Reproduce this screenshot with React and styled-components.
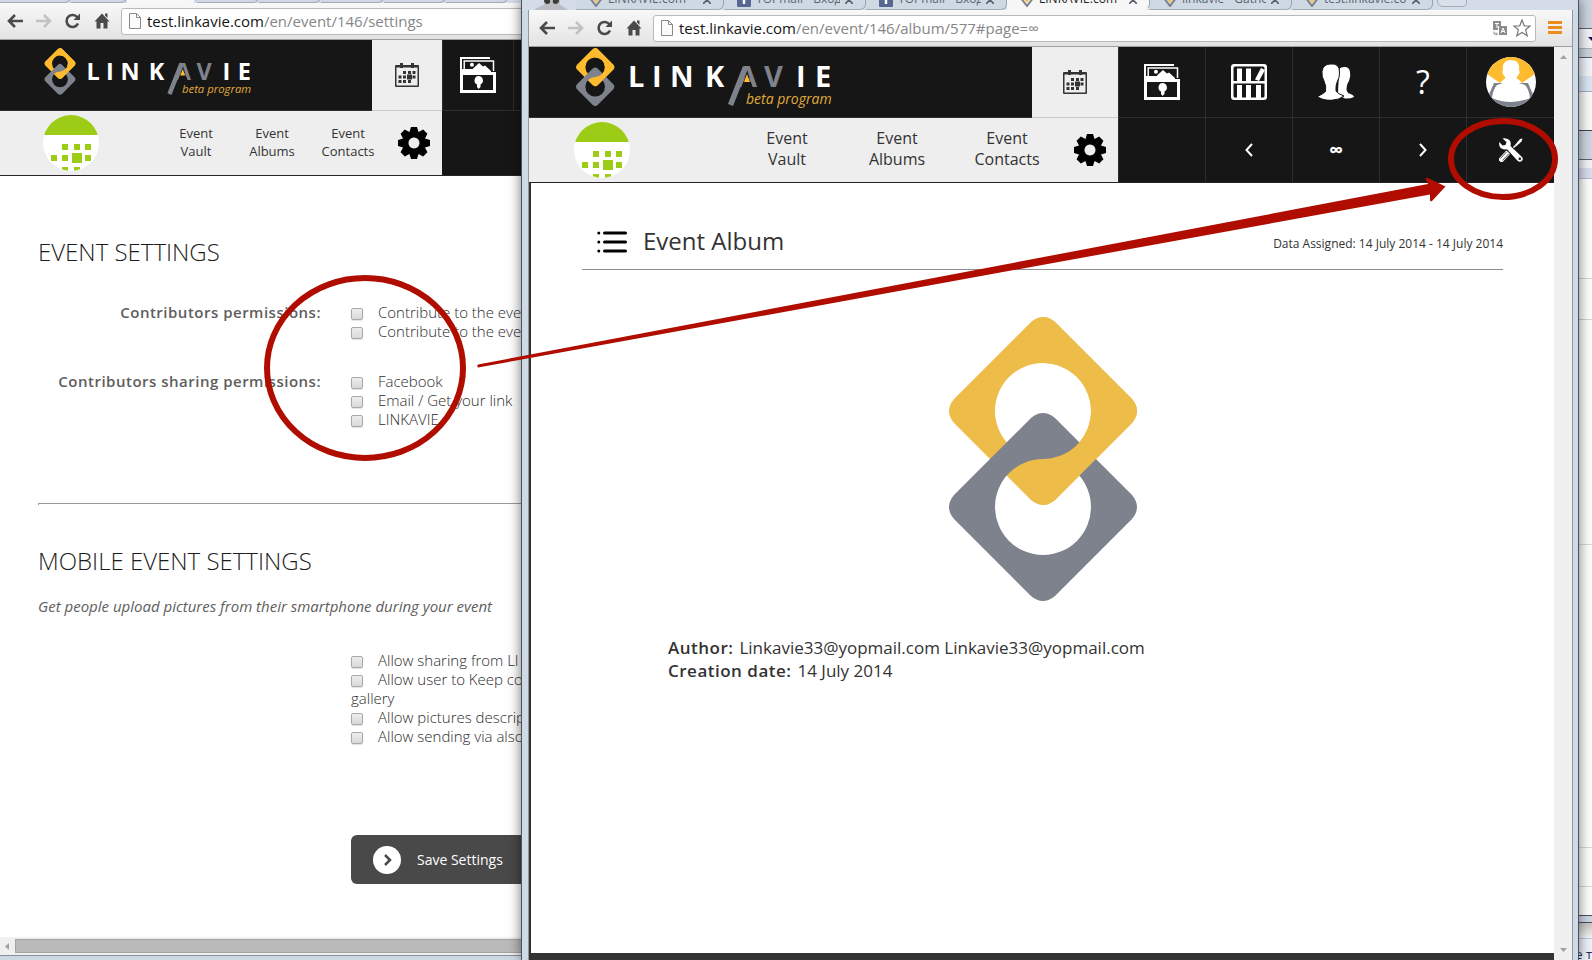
import React from 'react';
import styled, { createGlobalStyle, css } from 'styled-components';

const GlobalStyle = createGlobalStyle`
  * { box-sizing: border-box; }
  body { margin: 0; overflow: hidden; background: #fff; font-family: "Open Sans", "Noto Sans", sans-serif; color: #2e2e2e; }
  button { font: inherit; color: inherit; border: 0; padding: 0; background: none; }
  a { color: inherit; text-decoration: none; }
  h1, h2, p, dl, dd, fieldset { margin: 0; padding: 0; border: 0; font-weight: 400; }
  svg { display: block; flex: none; }
`;

const Desktop = styled.div`
  position: relative;
  height: 100vh;
  overflow: hidden;
`;

/* ---------- windows ---------- */

const BackWindow = styled.section`
  position: absolute;
  inset: 0 auto 0 0;
  width: 44%;
  display: flex;
  flex-direction: column;
  background: #fff;
`;

const FrontWindow = styled.section`
  position: absolute;
  inset: 0 13px 0 521px;
  display: flex;
  flex-direction: column;
  background: #d0dae6;
  border: solid #4c525b;
  border-width: 0 1px;
  box-shadow: 0 0 12px rgba(0, 0, 0, 0.55);
`;

const FrontInner = styled.div`
  flex: 1;
  min-height: 0;
  margin: 0 5px 0 6px;
  display: flex;
  flex-direction: column;
  border: solid #8d98a7;
  border-width: 0 1px;
`;

const Viewport = styled.div`
  flex: 1;
  min-height: 0;
  display: flex;
`;

const Strip = styled.aside`
  position: absolute;
  inset: 0 0 0 auto;
  width: 40px;
  display: flex;
  flex-direction: column;
`;

const Band = styled.div`
  flex: none;
  height: ${(p) => p.$h}px;
  background: ${(p) => p.$bg};
  border-bottom: ${(p) => (p.$line ? `1px solid ${p.$line}` : '0')};
  display: flex;
  align-items: center;
  justify-content: flex-end;
  overflow: hidden;
`;

const StripText = styled.span`
  font-size: 13px;
  line-height: 16px;
  color: #1d2b52;
  white-space: nowrap;
`;

/* ---------- browser chrome ---------- */

const Tabs = styled.div`
  flex: none;
  height: ${(p) => p.$h}px;
  padding-left: ${(p) => p.$pad}px;
  display: flex;
  align-items: flex-end;
  overflow: hidden;
  background: #d3dce8;
`;

const Tab = styled.button`
  flex: none;
  width: ${(p) => p.$w}px;
  height: 24px;
  padding: 0 12px 2px 13px;
  display: flex;
  align-items: flex-end;
  gap: 5px;
  font-size: 12px;
  line-height: 16px;
  color: ${(p) => (p.$active ? '#222' : '#5c6470')};
  background: ${(p) => (p.$active ? '#f7f7f7' : '#cfd9e4')};
  border-right: 1px solid #9aa4b0;
  border-bottom: 1px solid ${(p) => (p.$active ? '#f7f7f7' : '#a3abb6')};
  border-radius: 0 0 6px 0;
  span { flex: 1; overflow: hidden; white-space: nowrap; text-align: left; }
  svg:last-child { margin-bottom: 3px; }
`;

const NewTab = styled.button`
  width: 30px;
  height: 16px;
  margin: 0 0 3px 4px;
  border: 1px solid #a3abb6;
  border-radius: 0 0 4px 6px;
  background: #d8e0ea;
`;

const Persona = styled.span`
  width: 48px;
  height: 10px;
  display: flex;
  align-items: flex-end;
  padding-left: 6px;
`;

const Toolbar = styled.div`
  flex: none;
  height: 37px;
  padding-left: ${(p) => p.$pad}px;
  padding-right: 10px;
  display: flex;
  align-items: center;
  background: linear-gradient(#f8f8f8, #e3e3e3);
  border-bottom: 1px solid #9f9f9f;
`;

const NavButtons = styled.div`
  display: flex;
  gap: 13px;
`;

const Address = styled.div`
  flex: 1;
  height: 27px;
  margin: 0 12px 0 11px;
  padding: 0 4px 0 7px;
  display: flex;
  align-items: center;
  gap: 6px;
  background: #fff;
  border: 1px solid #b9b9b9;
  border-radius: 3px;
`;

const Url = styled.div`
  flex: 1;
  font-size: 15px;
  line-height: 20px;
  white-space: nowrap;
  color: #868686;
  b { font-weight: 400; color: #161616; }
`;

const VScroll = styled.div`
  flex: none;
  width: 18px;
  padding: 7px 0 6px;
  display: flex;
  flex-direction: column;
  align-items: center;
  justify-content: space-between;
  background: #f0f0f0;
`;

const HScroll = styled.div`
  flex: none;
  height: 18px;
  padding: 2px 0 2px 4px;
  display: flex;
  align-items: center;
  gap: 4px;
  background: #f0f0f0;
`;

const HThumb = styled.div`
  flex: 1;
  height: 14px;
  background: #bababa;
  border: 1px solid #a3a3a3;
`;

const BottomEdge = styled.div`
  flex: none;
  height: 5px;
  background: #cdd8e5;
  border-top: 1px solid #868f9b;
`;

/* ---------- site header ---------- */

const Page = styled.div`
  flex: 1;
  min-width: 0;
  min-height: 0;
  display: flex;
  flex-direction: column;
  overflow: hidden;
`;

const HeaderRow = styled.div`
  flex: none;
  display: flex;
  height: ${(p) => p.$h}px;
  background: #161616;
  border-bottom: ${(p) => (p.$last ? '1px solid #2a2226' : '0')};
`;

const Brand = styled.a`
  flex: ${(p) => (p.$w ? `0 0 ${p.$w}px` : '1')};
  padding-left: ${(p) => p.$pad}px;
  padding-top: ${(p) => p.$top}px;
  border-bottom: 1px solid #2e2e2e;
`;

const Cell = styled.button`
  flex: 0 0 ${(p) => p.$w}px;
  display: flex;
  align-items: center;
  justify-content: center;
  color: #fff;
  border-left: 1px solid #2d2d2d;
  border-bottom: ${(p) => (p.$flat ? '0' : '1px solid #2e2e2e')};
  ${(p) =>
    p.$active &&
    css`
      background: #eee;
      border-color: #c9c9c9;
      border-left: 0;
    `}
`;

const Question = styled.span`
  font-size: 32px;
  line-height: 40px;
`;

const Infinity = styled.span`
  font-size: 20px;
  line-height: 20px;
  font-weight: 700;
`;

const SubBar = styled.nav`
  flex: ${(p) => (p.$w ? `0 0 ${p.$w}px` : '1')};
  padding-left: ${(p) => p.$pad}px;
  padding-right: 12px;
  display: flex;
  align-items: center;
  background: #eee;
`;

const Links = styled.div`
  flex: 1;
  display: flex;
  justify-content: flex-end;
  padding: 0 12px 2px 0;
`;

const NavLink = styled.a`
  width: ${(p) => (p.$big ? 110 : 76)}px;
  font-size: ${(p) => (p.$big ? 16 : 13)}px;
  line-height: ${(p) => (p.$big ? 21 : 18)}px;
  text-align: center;
  color: #333;
`;

/* ---------- settings page ---------- */

const Settings = styled.main`
  flex: 1;
  padding: 60px 0 0 38px;
  background: #fff;
  color: #5e5e5e;
  font-size: 15px;
  line-height: 19px;
`;

const Heading = styled.h2`
  font-size: 24px;
  line-height: 32px;
  font-weight: 300;
  color: #1c1c1c;
`;

const Rule = styled.hr`
  height: 2px;
  margin: 74px 0 40px;
  border: solid #9a9a9a;
  border-width: 1px 0 0 1px;
`;

const Intro = styled.p`
  margin-top: 20px;
  font-style: italic;
`;

const Group = styled.fieldset`
  display: grid;
  grid-template-columns: 283px 1fr;
  column-gap: 30px;
  margin-top: ${(p) => p.$gap}px;
`;

const GroupName = styled.div`
  text-align: right;
  font-weight: 600;
  letter-spacing: 0.5px;
`;

const Option = styled.label`
  display: block;
  white-space: nowrap;
  font-weight: 300;
  color: #2c2c2c;
`;

const Check = styled.input`
  appearance: none;
  width: 12px;
  height: 12px;
  margin: 0 15px 0 0;
  vertical-align: -2px;
  border: 1px solid #a9a9a9;
  border-radius: 2px;
  background: linear-gradient(#ededed, #d9d9d9);
  box-shadow: 0 1px 1px rgba(0, 0, 0, 0.12);
`;

const Save = styled.button`
  width: 190px;
  height: 49px;
  margin: 89px 0 0 313px;
  padding-left: 22px;
  display: flex;
  align-items: center;
  gap: 16px;
  border-radius: 6px;
  background: #494949;
  color: #fff;
  font-size: 14px;
`;

/* ---------- album page ---------- */

const Album = styled.main`
  flex: 1;
  padding: 42px 51px 0;
  background: #fff;
`;

const DarkEdge = styled.div`
  flex: 1;
  min-height: 0;
  display: flex;
  border: solid #333;
  border-width: 0 0 7px 2px;
`;

const AlbumHead = styled.header`
  display: flex;
  align-items: center;
  gap: 16px;
  padding: 0 0 12px 15px;
  border-bottom: 1px solid #8f8f8f;
`;

const AlbumTitle = styled.h1`
  flex: 1;
  font-size: 24px;
  line-height: 32px;
  font-weight: 400;
  color: #333;
`;

const Assigned = styled.p`
  padding-top: 6px;
  font-size: 12px;
  line-height: 18px;
  color: #333;
`;

const Cover = styled.div`
  display: flex;
  justify-content: center;
  padding: 47px 0 35px;
`;

const Details = styled.dl`
  padding-left: 86px;
  font-size: 17px;
  line-height: 23px;
  color: #333;
  div { display: flex; gap: 6px; }
  dt { font-weight: 600; letter-spacing: 0.5px; }
`;

const Markup = styled.svg`
  position: absolute;
  inset: 0;
  width: 100%;
  height: 100%;
  pointer-events: none;
`;

/* ---------- drawings ---------- */

const ring = (cy) =>
  `M82 ${cy - 89} Q94 ${cy - 99} 106 ${cy - 89} L183 ${cy - 12} Q193 ${cy} 183 ${cy + 12} L106 ${cy + 89} Q94 ${cy + 99} 82 ${cy + 89} L5 ${cy + 12} Q-5 ${cy} 5 ${cy - 12} Z ` +
  `M94 ${cy - 48} A48 48 0 1 0 94 ${cy + 48} A48 48 0 1 0 94 ${cy - 48} Z`;

const Links8 = ({ yellow, grey, id }) => (
  <>
    <defs>
      <clipPath id={id}>
        <rect x="94" y="0" width="96" height="290" />
      </clipPath>
    </defs>
    <path fillRule="evenodd" fill={yellow} d={ring(94)} />
    <path fillRule="evenodd" fill={grey} d={ring(190)} />
    <path fillRule="evenodd" fill={yellow} d={ring(94)} clipPath={`url(#${id})`} />
  </>
);

const CoverLogo = () => (
  <svg width="188" height="284" viewBox="0 0 188 284">
    <Links8 id="cover" yellow="#eebc48" grey="#7d828d" />
  </svg>
);

const BrandLogo = ({ width, height, id }) => (
  <svg width={width} height={height} viewBox="0 0 256 68" role="img" aria-label="Linkavie beta program">
    <g transform="scale(.204)">
      <Links8 id={id} yellow="#fdbb2d" grey="#7d828d" />
    </g>
    <text y="39" fontFamily="Open Sans" fontWeight="700" fontSize="29" fill="#fff">
      <tspan x="52 76 94 129">LINK</tspan>
      <tspan x="161 188" fill="#7d828d">AV</tspan>
      <tspan x="220 239">IE</tspan>
    </text>
    <path d="M165 40 L171 25 L177 40 Z" fill="#161616" />
    <path d="M169.500 19 L154.500 57" stroke="#7d828d" strokeWidth="5.500" />
    <path d="M168 34 L171 26 L174 34 Z" fill="#fdbb2d" />
    <text x="170" y="56" fontFamily="Open Sans" fontStyle="italic" fontSize="14" fill="#e0ab3a">
      beta program
    </text>
  </svg>
);

const Arrow = ({ flip, color = '#4a4a4a' }) => (
  <svg width="16" height="16" viewBox="0 0 16 16" fill="none" stroke={color} strokeWidth="2.600">
    <path d={flip ? 'M0 8 H14 M8 2 L14 8 L8 14' : 'M16 8 H2 M8 2 L2 8 L8 14'} />
  </svg>
);

const Reload = () => (
  <svg width="16" height="16" viewBox="0 0 16 16">
    <path d="M13 10.500 A6 6 0 1 1 12.500 4.500" fill="none" stroke="#4a4a4a" strokeWidth="2.600" />
    <path d="M15 0.500 V7 H8.500 Z" fill="#4a4a4a" />
  </svg>
);

const Home = () => (
  <svg width="16" height="16" viewBox="0 0 16 16" fill="#4a4a4a">
    <path d="M8 0.500 L15.500 8.500 H13.500 V15.500 H9.500 V10 H6.500 V15.500 H2.500 V8.500 H0.500 Z M11 0.500 H13.500 V5 L11 2.500 Z" />
  </svg>
);

const Sheet = () => (
  <svg width="12" height="16" viewBox="0 0 12 16" fill="#fafafa" stroke="#8a8a8a">
    <path d="M.5 .5 H7.500 L11.500 4.500 V15.500 H.5 Z M7.500 .5 V4.500 H11.500" />
  </svg>
);

const Translate = () => (
  <svg width="14" height="15" viewBox="0 0 14 15">
    <path d="M0 0 H8 V5 H5 V9 H0 Z" fill="#8b8b8b" />
    <path d="M2 2.500 H6 M4 2.500 V7" stroke="#fff" />
    <rect x="6" y="5" width="8" height="9" fill="#8b8b8b" />
    <path d="M8 12 L10 7 L12 12 M9 10.500 H11" stroke="#fff" fill="none" />
    <path d="M1 10.500 V13 H4 M3 11.500 L4.500 13 L3 14.500" stroke="#8b8b8b" fill="none" />
  </svg>
);

const Star = () => (
  <svg width="18" height="18" viewBox="0 0 18 18" fill="#fff" stroke="#777" strokeWidth="1.200">
    <path d="M9 1 L11.300 6.800 L17.200 7 L12.600 10.800 L14.200 16.800 L9 13.400 L3.800 16.800 L5.400 10.800 L.8 7 L6.700 6.800 Z" />
  </svg>
);

const MenuIcon = () => (
  <svg width="14" height="14" viewBox="0 0 14 14" fill="#ec8c1c">
    <path d="M0 0 H14 V3 H0 Z M0 5 H14 V8 H0 Z M0 10 H14 V13 H0 Z" />
  </svg>
);

const TabIcon = ({ mail }) => (
  <svg width="14" height="14" viewBox="0 0 14 14">
    {mail ? (
      <>
        <rect width="14" height="14" rx="1" fill="#56688f" />
        <path d="M7 3 V11" stroke="#fff" strokeWidth="2.500" />
      </>
    ) : (
      <>
        <path d="M7 1 L12 6.500 L7 13 L2 6.500 Z" fill="none" stroke="#7d828d" strokeWidth="2" />
        <path d="M4 6 L7 3 L10 6 L7 10 Z" fill="#f3c558" />
      </>
    )}
  </svg>
);

const Close = () => (
  <svg width="8" height="8" viewBox="0 0 8 8" stroke="#59606b" strokeWidth="1.600">
    <path d="M0 0 L8 8 M8 0 L0 8" />
  </svg>
);

const Tri = ({ d }) => (
  <svg width="7" height="7" viewBox="0 0 7 7" fill="#a2a2a2">
    <path d={d} />
  </svg>
);

const Calendar = () => (
  <svg width="24" height="24" viewBox="0 0 24 24" fill="#333">
    <path fillRule="evenodd" d="M1 2 H23 Q24 2 24 3 V23 Q24 24 23 24 H1 Q0 24 0 23 V3 Q0 2 1 2 Z M1.500 4.500 V22.500 H22.500 V4.500 Z" />
    <path d="M5 0 H8 V5 H5 Z M16 0 H19 V5 H16 Z" />
    <path d="M8 8 h3 v3 h-3z M13 8 h3 v3 h-3z M17.500 8 h3 v3 h-3z M3.500 12.500 h3 v3 h-3z M8 12.500 h3 v3 h-3z M12 11.500 h5 v5 h-5z M17.500 12.500 h3 v3 h-3z M3.500 17 h3 v3 h-3z M8 17 h3 v3 h-3z M13 17 h3 v3 h-3z" />
  </svg>
);

const Photos = () => (
  <svg width="36" height="36" viewBox="0 0 36 36" fill="none" stroke="#fff">
    <path strokeWidth="2" d="M1 13 V1 H30" />
    <path strokeWidth="1.500" d="M4.200 13 V4 H33.500 V14" />
    <path fill="#fff" stroke="none" d="M13 15 V11.500 L19 6 L23 9.500 L25 8.500 L31 14 V16 Z M12 5.800 a2 2 0 1 1-.1 4 a2 2 0 0 1 .1-4z" />
    <path fill="#fff" stroke="none" fillRule="evenodd" d="M0 12 H13 V15 H36 V36 H0 Z M3 18 V33 H33 V18 Z" />
    <path fill="#fff" stroke="none" d="M18.500 19 a4.500 4.500 0 0 1 2 8.500 V30 L18.500 32 L17 30 V27.500 a4.500 4.500 0 0 1 1.500 -8.500z" />
  </svg>
);

const Shelf = () => (
  <svg width="36" height="36" viewBox="0 0 36 36" fill="#fff">
    <path fillRule="evenodd" d="M3 0 H33 Q36 0 36 3 V33 Q36 36 33 36 H3 Q0 36 0 33 V3 Q0 0 3 0 Z M4 2.500 Q2.500 2.500 2.500 4 V17 H33.500 V4 Q33.500 2.500 32 2.500 Z M2.500 19.500 V32 Q2.500 33.500 4 33.500 H32 Q33.500 33.500 33.500 32 V19.500 Z" />
    <path d="M6 4.500 h5 v12.500 h-5z M15 4.500 h5 v12.500 h-5z M30 4 L34 6 L28 17 L24 15.500 Z M6 21 h5 v13 h-5z M15 21 h5 v13 h-5z M25 21 h5 v13 h-5z" />
  </svg>
);

const People = () => (
  <svg width="36" height="36" viewBox="0 0 36 36" fill="#fff">
    <path d="M22 4 Q31 1 32 8 Q33 12 31 17 Q28.500 20 28.500 26 L30 29 Q36 31 36 33 Q32 35 27 34.500 L20 31 Q20 20 22 4 Z" />
    <path stroke="#161616" strokeWidth="1" d="M12.500 0 Q22 -1 21.500 9 Q21.500 14 19.500 17 Q17.500 21 18 27 Q20 30 26 32 Q21 36 13 36.300 Q4 36.300 -.5 32.500 Q5 30 7.500 27.500 Q8.500 22 6 17 Q3.500 13 4 7.500 Q5 0 12.500 0 Z" />
  </svg>
);

const Avatar = () => (
  <svg width="50" height="50" viewBox="0 0 50 50">
    <defs>
      <clipPath id="avatar">
        <circle cx="25" cy="25" r="25" />
      </clipPath>
    </defs>
    <g clipPath="url(#avatar)">
      <rect width="50" height="50" fill="#fff" />
      <path d="M1 17 L14 26 L18 22 H32 L36 26 L49 17 V0 H1 Z" fill="#fdbb2d" />
      <path d="M8 26 L1 42 L10 50 H40 L49 42 L42 26 Z" fill="#7d828d" />
      <path d="M25 3 Q34 3 33 13 Q35 16 31 20 Q30 25 33 26 L39 28 Q43 32 44 41 Q35 45 25 45 Q15 45 6 41 Q7 32 11 28 L17 26 Q20 25 19 20 Q15 16 17 13 Q16 3 25 3 Z" fill="#fff" />
    </g>
  </svg>
);

const Gear = () => (
  <svg width="32" height="32" viewBox="0 0 32 32">
    {[0, 45, 90, 135].map((a) => (
      <path key={a} transform={`rotate(${a} 16 16)`} d="M13 0 H19 L20.500 5 H11.500 Z M13 32 H19 L20.500 27 H11.500 Z" />
    ))}
    <path fillRule="evenodd" d="M16 4 a12 12 0 1 0 .01 0z M16 10.500 a5.500 5.500 0 1 1 -.01 0z" />
  </svg>
);

const Tools = () => (
  <svg width="24" height="24" viewBox="0 0 24 24">
    <path d="M23.500 .5 L21 1 L16 7 L17 8.500 L22.500 3.500 Z" fill="#fff" />
    <path d="M16.500 7.500 L9 15" stroke="#fff" strokeWidth="1.600" />
    <path d="M2.500 21.500 L8.500 15" stroke="#fff" strokeWidth="5" strokeLinecap="round" />
    <path d="M1.500 20.500 L7.500 14 M3.500 22.500 L9.500 16" stroke="#161616" strokeWidth=".7" />
    <path d="M8 8 L20.500 20.500" stroke="#161616" strokeWidth="7" />
    <path d="M3.500 .5 L7.500 4 L6.500 7 L3.500 7.500 L.3 4 Q-.5 9 3 10.800 Q5.500 12 8 11.200 L18.800 23 Q21 24.500 23 22.800 Q24.500 21 23 19 L11.500 8 Q12.500 4 10 1.800 Q7 -.6 3.500 .5 Z" fill="#fff" />
    <circle cx="20.800" cy="20.800" r="1.300" fill="#161616" />
  </svg>
);

const Chevron = ({ left }) => (
  <svg width="8" height="14" viewBox="0 0 8 14" fill="none" stroke="#fff" strokeWidth="2">
    <path d={left ? 'M7 1 L1.500 7 L7 13' : 'M1 1 L6.500 7 L1 13'} />
  </svg>
);

const SaveMark = () => (
  <svg width="28" height="28" viewBox="0 0 28 28" fill="none">
    <circle cx="14" cy="14" r="14" fill="#fff" />
    <path d="M12 9 L17 14 L12 19" stroke="#494949" strokeWidth="2.500" />
  </svg>
);

const EventBadge = ({ id }) => (
  <svg width="56" height="56" viewBox="0 0 56 56">
    <defs>
      <clipPath id={id}>
        <circle cx="28" cy="28" r="28" />
      </clipPath>
    </defs>
    <g clipPath={`url(#${id})`}>
      <rect width="56" height="56" fill="#fff" />
      <path
        fill="#9ccc16"
        d="M0 0 H56 V20 H0 Z M19 29 h6 v6 h-6z M31 29 h6 v6 h-6z M42 29 h6 v6 h-6z M8 40 h6 v6 h-6z M19 40 h6 v6 h-6z M29 38 h10 v10 h-10z M42 40 h6 v6 h-6z M19 52 h6 v4 h-6z M31 52 h6 v4 h-6z"
      />
    </g>
  </svg>
);

const ListIcon = () => (
  <svg width="30" height="24" viewBox="0 0 30 24" stroke="#000" strokeWidth="3" strokeLinecap="round">
    <path d="M7.500 4 H28.500 M7.500 13 H28.500 M7.500 22 H28.500 M1.800 4 h.01 M1.800 13 h.01 M1.800 22 h.01" />
  </svg>
);

const PersonaIcon = () => (
  <svg width="34" height="10" viewBox="0 0 34 10">
    <path d="M0 10 Q6 6 10 5 V0 H26 V5 Q30 7 34 10 Z" fill="#b9bcc1" />
    <path d="M10 0 H16 Q17 4 13 4 Q10 3 10 0 Z M19 0 H25 Q25 4 21 4 Q18 3 19 0 Z" fill="#3b3b3b" />
  </svg>
);

/* ---------- composed parts ---------- */

const Chrome = ({ pad, host, path, extras }) => (
  <Toolbar $pad={pad}>
    <NavButtons>
      <button aria-label="Back"><Arrow /></button>
      <button aria-label="Forward"><Arrow flip color="#c2c2c2" /></button>
      <button aria-label="Reload"><Reload /></button>
      <button aria-label="Home"><Home /></button>
    </NavButtons>
    <Address>
      <Sheet />
      <Url><b>{host}</b>{path}</Url>
      {extras && <Translate />}
      {extras && <Star />}
    </Address>
    {extras && <button aria-label="Menu"><MenuIcon /></button>}
  </Toolbar>
);

const EventLinks = ({ big }) => (
  <Links>
    {['Vault', 'Albums', 'Contacts'].map((name) => (
      <NavLink key={name} href="#" $big={big}>
        Event<br />{name}
      </NavLink>
    ))}
  </Links>
);

const Tick = ({ children }) => (
  <Option>
    <Check type="checkbox" />
    {children}
  </Option>
);

const BACK_TABS = [[71], [56], [70, true], [62], [62], [63], [62], [62]];

const FRONT_TABS = [
  { text: 'LINKAVIE.com', w: 148 },
  { text: 'YOPmail - Входящие', w: 142, mail: true },
  { text: 'YOPmail - Входящие', w: 141, mail: true },
  { text: 'LINKAVIE.com', w: 143, active: true },
  { text: 'linkavie - Gather, share', w: 142 },
  { text: 'test.linkavie.com', w: 141 },
];

const SettingsWindow = () => (
  <BackWindow>
    <Tabs $h={3} $pad={0}>
      {BACK_TABS.map(([w, active], i) => (
        <Tab key={i} $w={w} $active={active} aria-label="Tab" />
      ))}
    </Tabs>
    <Chrome pad={7} host="test.linkavie.com" path="/en/event/146/settings" />
    <Page>
      <HeaderRow $h={71}>
        <Brand href="#" $w={372} $pad={44} $top={8}>
          <BrandLogo id="brand-s" width={208} height={55} />
        </Brand>
        <Cell $w={70} $active aria-label="Events"><Calendar /></Cell>
        <Cell $w={71} aria-label="Albums"><Photos /></Cell>
        <Cell $w={71} aria-label="Library" />
      </HeaderRow>
      <HeaderRow $h={65} $last>
        <SubBar $w={442} $pad={43}>
          <EventBadge id="badge-s" />
          <EventLinks />
          <button aria-label="Event settings"><Gear /></button>
        </SubBar>
      </HeaderRow>
      <Settings>
        <Heading>EVENT SETTINGS</Heading>
        <Group $gap={35}>
          <GroupName>Contributors permissions:</GroupName>
          <div>
            <Tick>Contribute to the eve</Tick>
            <Tick>Contribute to the eve</Tick>
          </div>
        </Group>
        <Group $gap={31}>
          <GroupName>Contributors sharing permissions:</GroupName>
          <div>
            <Tick>Facebook</Tick>
            <Tick>Email / Get your link</Tick>
            <Tick>LINKAVIE</Tick>
          </div>
        </Group>
        <Rule />
        <Heading>MOBILE EVENT SETTINGS</Heading>
        <Intro>Get people upload pictures from their smartphone during your event</Intro>
        <Group $gap={35}>
          <GroupName />
          <div>
            <Tick>Allow sharing from LI</Tick>
            <Tick>Allow user to Keep co<br />gallery</Tick>
            <Tick>Allow pictures descrip</Tick>
            <Tick>Allow sending via also</Tick>
          </div>
        </Group>
        <Save><SaveMark />Save Settings</Save>
      </Settings>
    </Page>
    <HScroll>
      <Tri d="M5 0 V7 L1 3.500 Z" />
      <HThumb />
    </HScroll>
    <BottomEdge />
  </BackWindow>
);

const AlbumWindow = () => (
  <FrontWindow>
    <Tabs $h={10} $pad={6}>
      <Persona><PersonaIcon /></Persona>
      {FRONT_TABS.map((t, i) => (
        <Tab key={i} $w={t.w} $active={t.active}>
          <TabIcon mail={t.mail} />
          <span>{t.text}</span>
          <Close />
        </Tab>
      ))}
      <NewTab aria-label="New tab" />
    </Tabs>
    <FrontInner>
      <Chrome pad={10} host="test.linkavie.com" path="/en/event/146/album/577#page=∞" extras />
      <Viewport>
        <Page>
          <HeaderRow $h={71}>
            <Brand href="#" $pad={47} $top={1}>
              <BrandLogo id="brand-l" width={256} height={68} />
            </Brand>
            <Cell $w={86} $active aria-label="Events"><Calendar /></Cell>
            <Cell $w={87} aria-label="Albums"><Photos /></Cell>
            <Cell $w={87} aria-label="Library"><Shelf /></Cell>
            <Cell $w={87} aria-label="Contacts"><People /></Cell>
            <Cell $w={87}><Question>?</Question></Cell>
            <Cell $w={88} aria-label="Profile"><Avatar /></Cell>
          </HeaderRow>
          <HeaderRow $h={65} $last>
            <SubBar $pad={45}>
              <EventBadge id="badge-l" />
              <EventLinks big />
              <button aria-label="Event settings"><Gear /></button>
            </SubBar>
            <Cell $w={87} $flat aria-label="Empty" />
            <Cell $w={87} $flat aria-label="Previous page"><Chevron left /></Cell>
            <Cell $w={87} $flat><Infinity>∞</Infinity></Cell>
            <Cell $w={87} $flat aria-label="Next page"><Chevron /></Cell>
            <Cell $w={88} $flat aria-label="Tools"><Tools /></Cell>
          </HeaderRow>
          <DarkEdge>
            <Album>
              <AlbumHead>
                <ListIcon />
                <AlbumTitle>Event Album</AlbumTitle>
                <Assigned>Data Assigned: 14 July 2014 - 14 July 2014</Assigned>
              </AlbumHead>
              <Cover><CoverLogo /></Cover>
              <Details>
                <div><dt>Author:</dt><dd>Linkavie33@yopmail.com Linkavie33@yopmail.com</dd></div>
                <div><dt>Creation date:</dt><dd>14 July 2014</dd></div>
              </Details>
            </Album>
          </DarkEdge>
        </Page>
        <VScroll>
          <Tri d="M0 5 H7 L3.500 1 Z" />
          <Tri d="M0 1 H7 L3.500 5 Z" />
        </VScroll>
      </Viewport>
    </FrontInner>
  </FrontWindow>
);

const SideStrip = () => (
  <Strip>
    <Band $h={29} $bg="#cbd5e0" $line="#5b6470" />
    <Band $h={20} $bg="#f3f4f9" $line="#a9b3bf">
      <svg width="4" height="4" viewBox="0 0 4 4"><path d="M0 0 H4 V4 Z" fill="#14145a" /></svg>
    </Band>
    <Band $h={9} $bg="#ccd5df" $line="#5b6470" />
    <Band $h={18} $bg="#f0f5fb" />
    <Band $h={16} $bg="#dbe7f5" $line="#9fb2c8" />
    <Band $h={39} $bg="#fafafa" $line="#3f4650" />
    <Band $h={29} $bg="#ced7e2" $line="#5b6470" />
    <Band $h={8} $bg="#f3f4fa" />
    <Band $h={11} $bg="#d9def0" $line="#b9bfd4" />
    <Band $h={100} $bg="#fff" $line="#d4d4d4" />
    <Band $h={41} $bg="#fff" $line="#d4d4d4" />
    <Band $h={225} $bg="#fff" $line="#dadada" />
    <Band $h={303} $bg="#fff" $line="#dadada" />
    <Band $h={39} $bg="#fff" $line="#dadada" />
    <Band $h={29} $bg="#fff" $line="#4c525b" />
    <Band $h={7} $bg="#cdd8e5" $line="#4c525b" />
    <Band $h={16} $bg="linear-gradient(#c4c4c4, #f6f6f6)" $line="#b9cbe0" />
    <Band $h={30} $bg="#eef3fb"><StripText>е т</StripText></Band>
  </Strip>
);

export default function App() {
  return (
    <Desktop>
      <GlobalStyle />
      <SettingsWindow />
      <SideStrip />
      <AlbumWindow />
      <Markup fill="none" stroke="#b00d00" strokeWidth="6">
        <ellipse cx="365" cy="368" rx="98" ry="90" />
        <ellipse cx="1503" cy="159" rx="52" ry="38" />
        <path
          fill="#b00d00"
          stroke="none"
          d="M478 364.500 L1428 184 L1425.500 179 Q1426 177 1428 178 L1445.500 186.500 L1432 201 Q1430 202 1430 200 L1430 194.500 L478 367.500 Q476.500 366 478 364.500 Z"
        />
      </Markup>
    </Desktop>
  );
}
